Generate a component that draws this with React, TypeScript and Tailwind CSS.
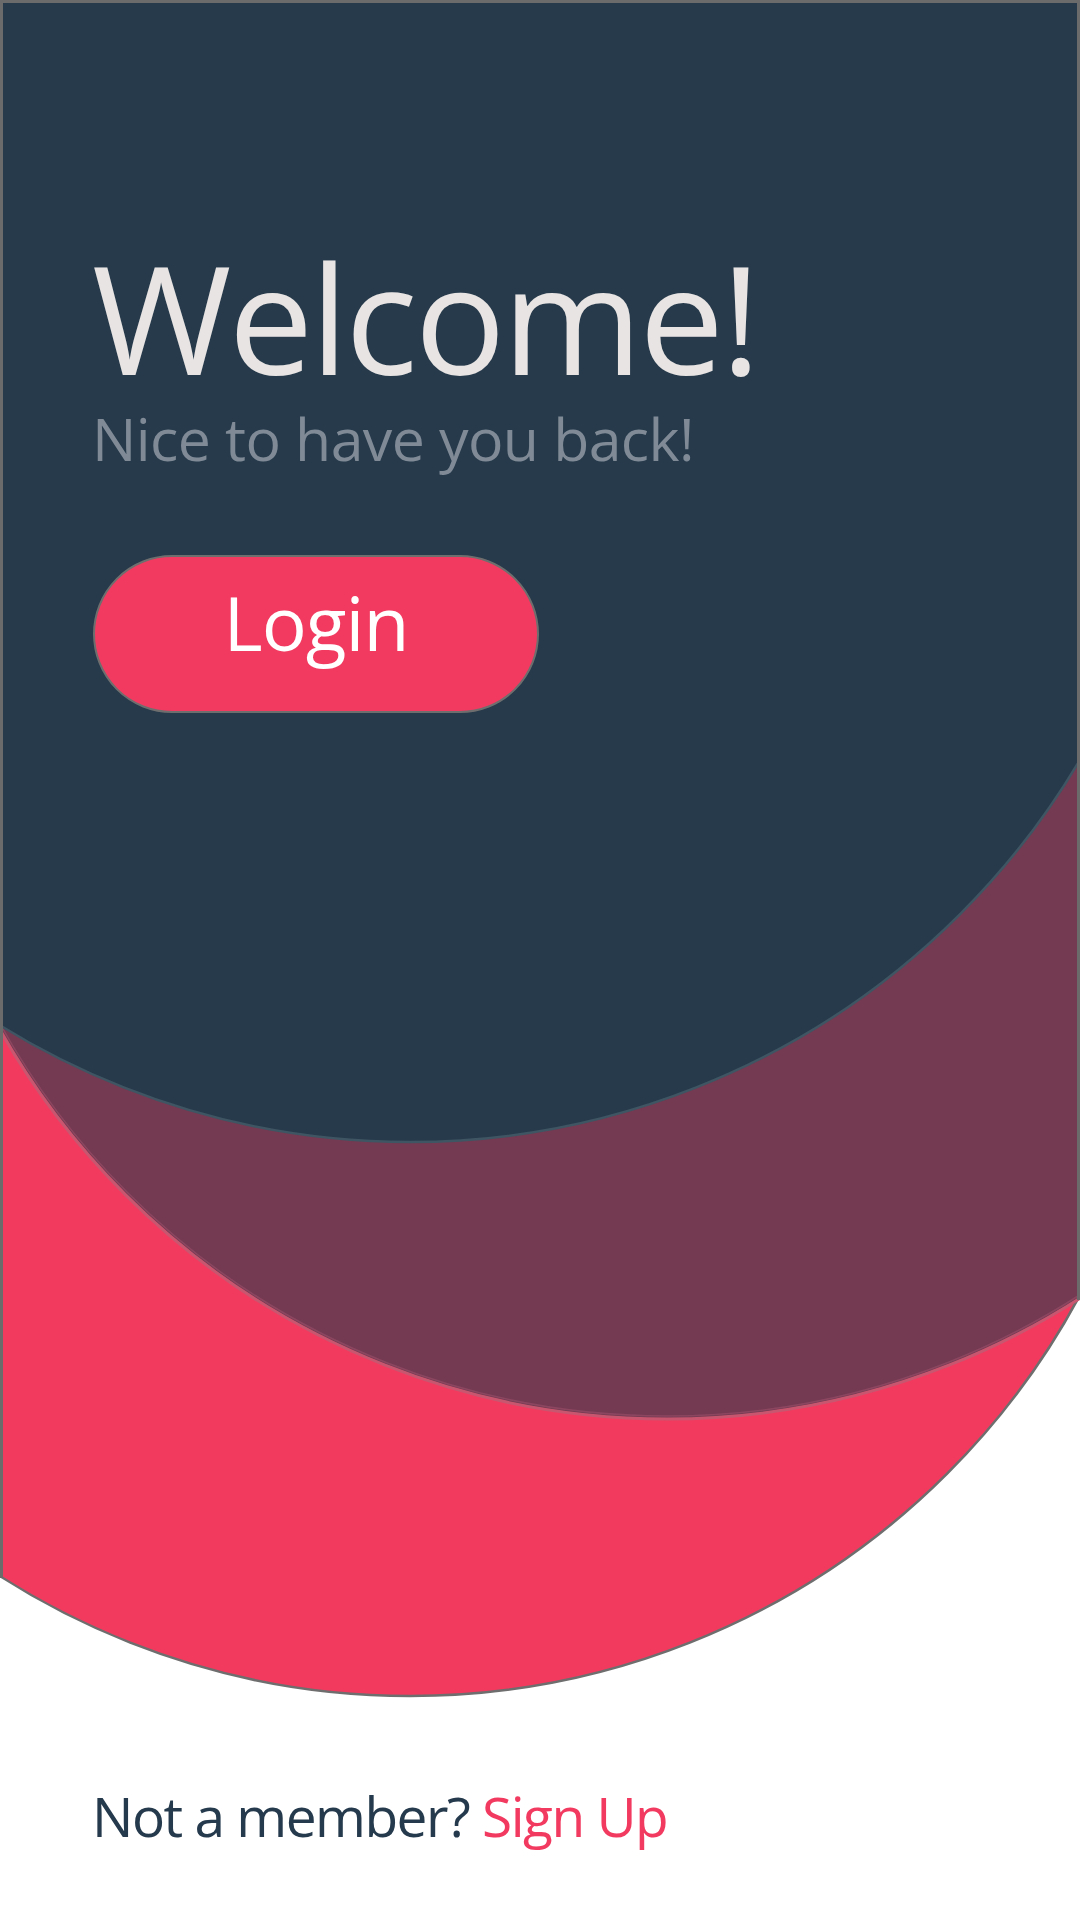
import React from "react";

const NAVY = "#263a4b";
const MAUVE = "#733a51";
const PINK = "#f23a5f";

const Waves: React.FC = () => (
  <svg
    className="absolute inset-0"
    width="1080"
    height="1920"
    viewBox="0 0 1080 1920"
    aria-hidden="true"
  >
    <circle cx="410" cy="936" r="760" fill={PINK} stroke="#6e6e6e" strokeWidth="2.5" />
    <circle cx="667" cy="653" r="766" fill={MAUVE} stroke="#c9566f" strokeWidth="3" />
    <circle cx="667" cy="653" r="763" fill="none" stroke="#8c4660" strokeWidth="1.5" />
    <circle cx="410" cy="364" r="778" fill={NAVY} stroke="#3f5563" strokeWidth="2.5" />
    {/* frame edges */}
    <rect x="0" y="0" width="1080" height="3" fill="#6b6b6b" />
    <rect x="0" y="0" width="3" height="1578" fill="#6b6b6b" />
    <rect x="1077" y="0" width="3" height="1300" fill="#6b6b6b" />
  </svg>
);

export default function App() {
  return (
    <div
      className="relative w-[1080px] h-[1920px] overflow-hidden bg-white"
      style={{ fontFamily: "'Open Sans', 'Noto Sans', sans-serif" }}
    >
      <Waves />

      <div className="relative flex flex-col pl-[92px]">
        <h1 className="mt-[241px] text-[151px] leading-none font-normal text-[#e8e4e3] tracking-[-3px]">
          Welcome!
        </h1>
        <p className="mt-[17px] text-[59px] leading-none text-[#7f8a96] tracking-[-0.6px]">
          Nice to have you back!
        </p>

        <button className="mt-[87px] ml-[1px] w-[446px] h-[158px] rounded-full bg-[#f23a60] border-2 border-[#6e6e6e] flex items-center justify-center pb-6 text-[75px] leading-none text-white tracking-[-1px]">
          Login
        </button>

        <p className="mt-[1075px] text-[55px] leading-none text-[#253a4c] tracking-[-1.5px]">
          Not a member? <span className="text-[#f23a60]">Sign Up</span>
        </p>
      </div>
    </div>
  );
}
